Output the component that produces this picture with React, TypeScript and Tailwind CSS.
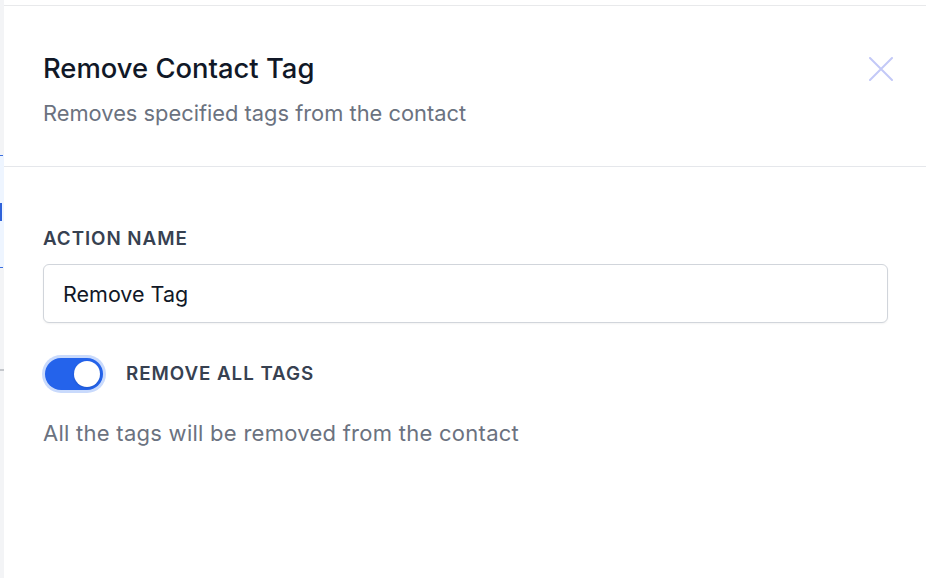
import { useState } from 'react'

export default function App() {
  const [name, setName] = useState('Remove Tag')
  const [removeAll, setRemoveAll] = useState(true)

  return (
    <div className="flex h-[578px] w-[926px] overflow-hidden bg-white font-['Inter',sans-serif]">
      {/* background canvas peeking out on the left */}
      <div className="flex w-[4px] shrink-0 flex-col bg-[#f3f4f6]">
        <div className="h-[155px]" />
        <div className="relative h-[113px] bg-[#eef5ff]">
          <div className="absolute left-0 top-0 h-px w-[3px] bg-[#3b6fe0]" />
          <div className="absolute left-0 top-[48px] h-[18px] w-[2px] bg-[#2f62d9]" />
          <div className="absolute bottom-0 left-0 h-px w-[3px] bg-[#3b6fe0]" />
        </div>
        <div className="mt-[101px] h-[2px] w-full bg-[#c4c7cc]" />
      </div>

      <div className="flex flex-1 flex-col bg-white pt-[5px]">
        <div className="flex flex-1 flex-col border-t border-[#e8e9eb]">
          {/* Header */}
          <div className="flex items-start justify-between border-b border-[#e5e7eb] pb-[38px] pl-[39px] pr-[33px] pt-[45px]">
            <div className="flex flex-col gap-[13px]">
              <h2 className="text-[27.4px] font-medium leading-[34px] text-[#111827]">Remove Contact Tag</h2>
              <p className="text-[21.85px] leading-[30px] text-[#6b7280]">Removes specified tags from the contact</p>
            </div>
            <button type="button" className="mt-[6px] text-[#c3c9f7]">
              <svg width="24" height="24" viewBox="0 0 24 24" fill="none" stroke="currentColor" strokeWidth="2" strokeLinecap="round">
                <path d="M1 1L23 23M23 1L1 23" />
              </svg>
            </button>
          </div>

          {/* Body */}
          <div className="flex flex-col pl-[39px] pr-[38px] pt-[60px]">
            <label className="text-[18.8px] font-semibold uppercase leading-[24px] tracking-[0.05em] text-[#374151]">
              Action name
            </label>
            <input
              value={name}
              onChange={(e) => setName(e.target.value)}
              className="mt-[13px] h-[59px] w-full rounded-[6px] border border-[#d1d5db] bg-white px-[19px] text-[21.5px] text-[#111827] shadow-[0_1px_2px_rgba(0,0,0,0.05)] outline-none"
            />

            <div className="mt-[35px] flex items-center gap-[23px] pl-[2px]">
              <button
                type="button"
                onClick={() => setRemoveAll(!removeAll)}
                className={[
                  'flex h-[32px] w-[58px] items-center rounded-full p-[3px] ring-[3px] ring-[#c9dafc]',
                  removeAll ? 'justify-end bg-[#2463eb]' : 'justify-start bg-[#e5e7eb]',
                ].join(' ')}
              >
                <span className="h-[26px] w-[26px] rounded-full bg-white shadow" />
              </button>
              <span className="text-[18.8px] font-semibold uppercase tracking-[0.05em] text-[#374151]">Remove all tags</span>
            </div>

            <p className="mt-[28px] text-[22px] leading-[30px] tracking-[0.012em] text-[#6b7280]">All the tags will be removed from the contact</p>
          </div>
        </div>
      </div>
    </div>
  )
}
